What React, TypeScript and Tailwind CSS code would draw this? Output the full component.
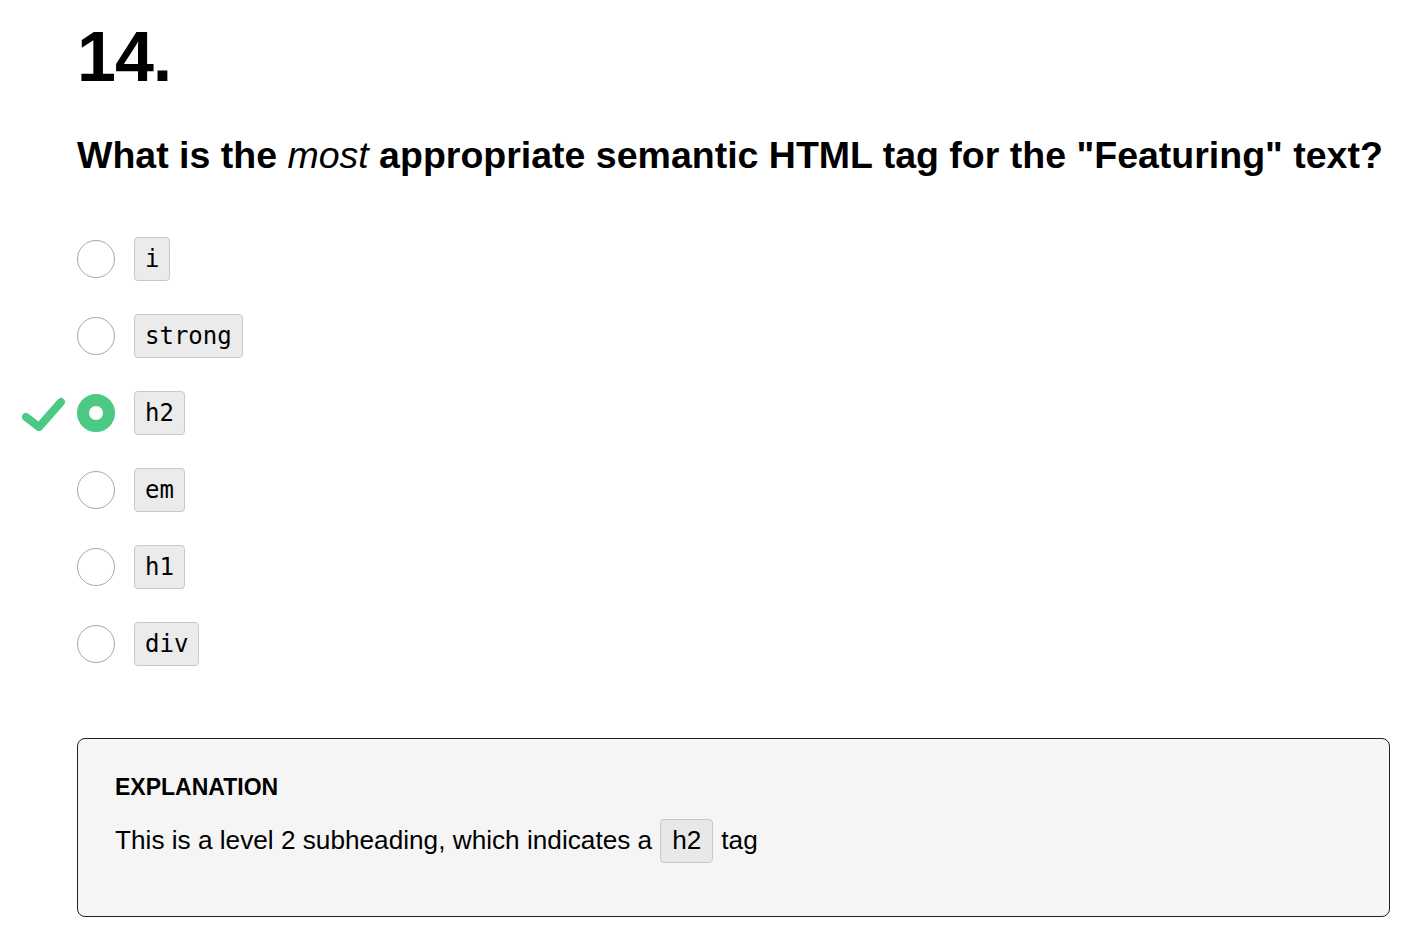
import React from "react";

const options = ["i", "strong", "h2", "em", "h1", "div"];
const correct = "h2";

function Check() {
  return (
    <svg width="48" height="40" viewBox="0 0 48 40" className="absolute left-[-58px] top-1/2 -translate-y-[55%]">
      <path d="M7 26 L20 36 L42 11" fill="none" stroke="#4cc985" strokeWidth="8" strokeLinecap="round" strokeLinejoin="round" />
    </svg>
  );
}

export default function App() {
  return (
    <div className="bg-white min-h-[928px] pl-[77px] pr-[12px] text-black" style={{ fontFamily: '"Liberation Sans", Arial, sans-serif' }}>
      <h1 className="text-[70px] font-bold leading-none pt-[22px] tracking-[-1px]">14.</h1>
      <h2 className="text-[37.5px] font-bold leading-tight mt-[40px] whitespace-nowrap">
        What is the <em className="font-normal">most</em> appropriate semantic HTML tag for the "Featuring" text?
      </h2>
      <div className="mt-[58px] flex flex-col gap-[33px]">
        {options.map((o) => {
          const sel = o === correct;
          return (
            <div key={o} className="relative flex items-center h-[44px]">
              {sel && <Check />}
              {sel ? (
                <span className="w-[38px] h-[38px] rounded-full border-[12px] border-[#4cc985] bg-white shrink-0" />
              ) : (
                <span className="w-[38px] h-[38px] rounded-full border border-[#a8a8a8] bg-white shrink-0" />
              )}
              <code
                className="ml-[19px] h-[44px] flex items-center px-[10px] rounded-[4px] border border-[#c8c8c8] bg-[#ebebeb] text-[24px]"
                style={{ fontFamily: '"DejaVu Sans Mono", "Liberation Mono", monospace' }}
              >
                {o}
              </code>
            </div>
          );
        })}
      </div>
      <div className="mt-[72px] w-[1313px] h-[179px] rounded-[8px] border border-[#222] bg-[#f5f5f5] pl-[37px] pt-[37px]">
        <div className="text-[23px] font-bold leading-none">EXPLANATION</div>
        <div className="mt-[20px] text-[26.2px] flex items-center">
          <span>This is a level 2 subheading, which indicates a</span>
          <span className="mx-[8px] h-[44px] flex items-center px-[11px] rounded-[4px] border border-[#c8c8c8] bg-[#e8e8e8]">h2</span>
          <span>tag</span>
        </div>
      </div>
    </div>
  );
}
